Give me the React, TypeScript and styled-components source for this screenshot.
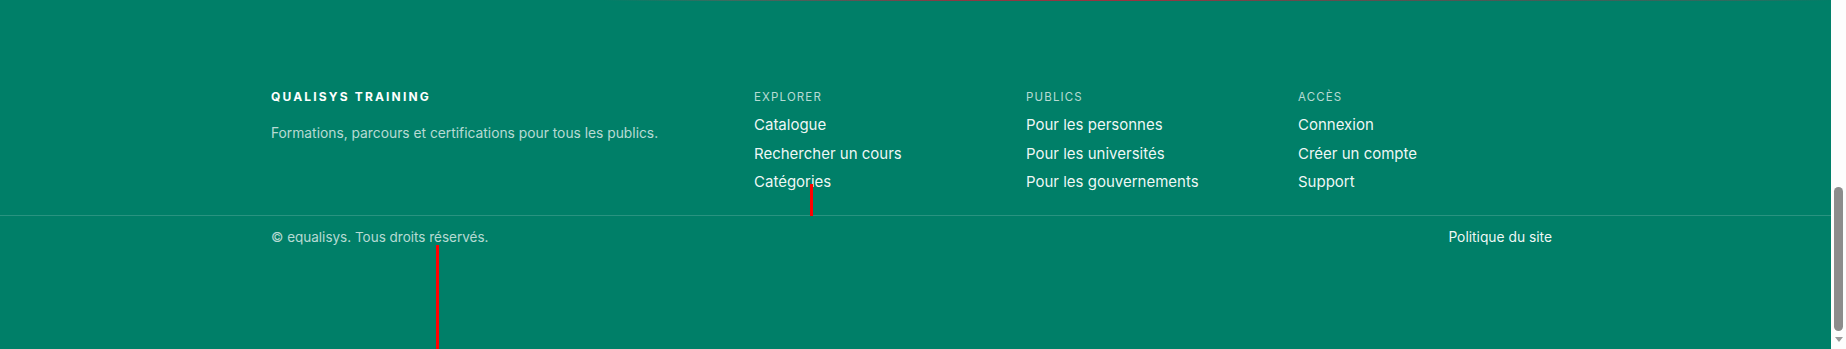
import React from "react";
import styled, { createGlobalStyle } from "styled-components";

const GlobalStyle = createGlobalStyle`
  html, body {
    margin: 0;
    padding: 0;
    background: #fdfdfd;
    overflow: hidden;
  }
  body {
    font-family: Inter, "Noto Sans", "Liberation Sans", sans-serif;
    -webkit-font-smoothing: antialiased;
  }
  * { box-sizing: border-box; }
`;

const Viewport = styled.div`
  display: flex;
  height: 349px;
  width: 100%;
`;

const Main = styled.div`
  flex: 1;
  min-width: 0;
  display: flex;
  flex-direction: column;
  background: #007f68;
`;

const AccentLine = styled.div`
  height: 1px;
  flex: none;
  background: linear-gradient(
    90deg,
    #007f68 0%,
    #007f68 33%,
    #3f6a5f 40%,
    #5a5656 46%,
    #8a3a44 52%,
    #9a3441 62%,
    #6a4a4c 70%,
    #4a5a56 82%,
    #2f6b5f 95%,
    #007f68 100%
  );
`;

const Footer = styled.footer`
  position: relative;
  flex: 1;
  background: #007f68;
  color: #ffffff;
`;

const Container = styled.div`
  width: 1291px;
  margin: 0 auto;
  padding-left: 1px;
`;

const TopGrid = styled(Container)`
  display: grid;
  grid-template-columns: 483px 272px 272px 1fr;
  padding-top: 88px;
  padding-bottom: 18px;
`;

const Column = styled.div`
  display: flex;
  flex-direction: column;
`;

const Brand = styled.h3`
  margin: 0;
  font-size: 12px;
  line-height: 16px;
  font-weight: 700;
  letter-spacing: 0.18em;
  color: #ffffff;
  text-transform: uppercase;
`;

const Tagline = styled.p`
  margin: 18px 0 0;
  font-size: 13.8px;
  line-height: 20px;
  color: rgba(255, 255, 255, 0.72);
`;

const ColumnTitle = styled.h4`
  margin: 0;
  font-size: 11.5px;
  line-height: 16px;
  font-weight: 400;
  letter-spacing: 0.1em;
  color: rgba(255, 255, 255, 0.72);
  text-transform: uppercase;
`;

const LinkList = styled.ul`
  list-style: none;
  margin: 6px 0 0;
  padding: 0;
  display: flex;
  flex-direction: column;
`;

const LinkItem = styled.li`
  font-size: 15px;
  line-height: 28.5px;
  color: rgba(255, 255, 255, 0.95);
`;

const Divider = styled.hr`
  margin: 0;
  border: 0;
  border-top: 1px solid rgba(255, 255, 255, 0.16);
`;

const BottomRow = styled(Container)`
  display: flex;
  justify-content: space-between;
  align-items: center;
  padding-top: 11px;
  padding-right: 9px;
`;

const Copyright = styled.span`
  font-size: 13.5px;
  line-height: 20px;
  color: rgba(255, 255, 255, 0.72);
`;

const PolicyLink = styled.a`
  font-size: 13.8px;
  line-height: 20px;
  color: rgba(255, 255, 255, 0.95);
  text-decoration: none;
`;

const Marker = styled.span<{ $left: number; $top: number; $height: number }>`
  position: absolute;
  left: ${(p) => p.$left}px;
  top: ${(p) => p.$top}px;
  width: 3px;
  height: ${(p) => p.$height}px;
  background: #ff0000;
`;

const ScrollTrack = styled.div`
  width: 15px;
  flex: none;
  background: #fdfdfd;
  display: flex;
  flex-direction: column;
  align-items: center;
  padding-top: 187px;
`;

const ScrollThumb = styled.div`
  width: 9px;
  height: 144px;
  border-radius: 5px;
  background: #8c8c8c;
`;

const ScrollArrow = styled.div`
  margin-top: 6px;
  width: 0;
  height: 0;
  border-left: 4px solid transparent;
  border-right: 4px solid transparent;
  border-top: 5px solid #9a9a9a;
`;

const columns = [
  { title: "Explorer", links: ["Catalogue", "Rechercher un cours", "Catégories"] },
  { title: "Publics", links: ["Pour les personnes", "Pour les universités", "Pour les gouvernements"] },
  { title: "Accès", links: ["Connexion", "Créer un compte", "Support"] },
];

export default function App() {
  return (
    <>
      <GlobalStyle />
      <Viewport>
        <Main>
          <AccentLine />
          <Footer>
            <TopGrid>
              <Column>
                <Brand>Qualisys Training</Brand>
                <Tagline>Formations, parcours et certifications pour tous les publics.</Tagline>
              </Column>
              {columns.map((col) => (
                <Column key={col.title}>
                  <ColumnTitle>{col.title}</ColumnTitle>
                  <LinkList>
                    {col.links.map((l) => (
                      <LinkItem key={l}>{l}</LinkItem>
                    ))}
                  </LinkList>
                </Column>
              ))}
            </TopGrid>
            <Divider />
            <BottomRow>
              <Copyright>© equalisys. Tous droits réservés.</Copyright>
              <PolicyLink href="#">Politique du site</PolicyLink>
            </BottomRow>
            <Marker $left={810} $top={183} $height={32} />
            <Marker $left={436} $top={244} $height={104} />
          </Footer>
        </Main>
        <ScrollTrack>
          <ScrollThumb />
          <ScrollArrow />
        </ScrollTrack>
      </Viewport>
    </>
  );
}
